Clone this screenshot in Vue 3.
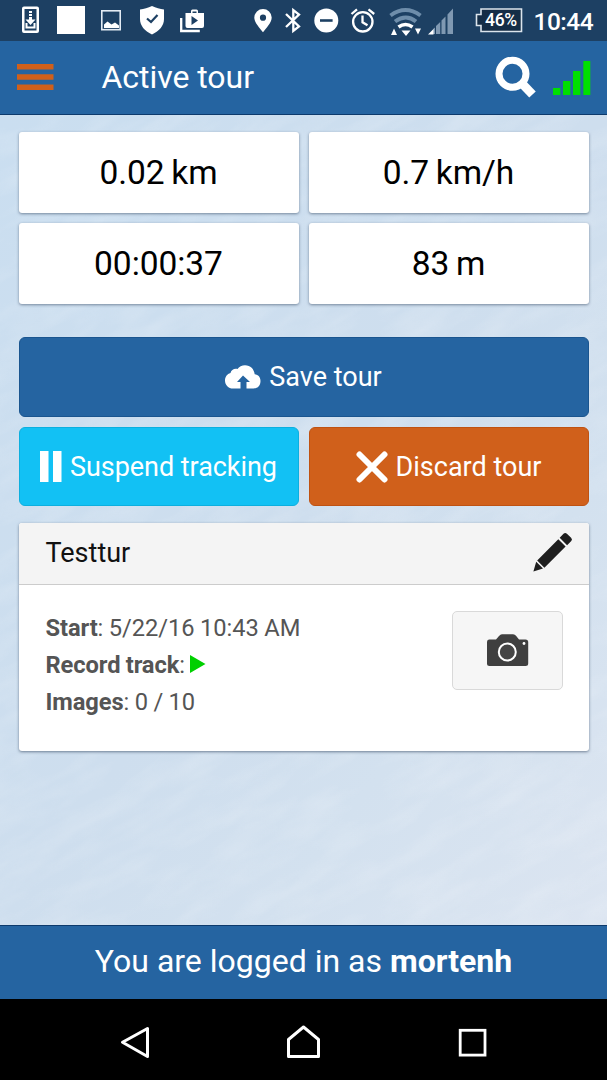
<script setup>
const stats = ['0.02 km', '0.7 km/h', '00:00:37', '83 m']
const tour = { name: 'Testtur', start: '5/22/16 10:43 AM', images: '0 / 10' }
const user = 'mortenh'
</script>

<template>
  <div class="phone">
    <div class="status">
      <svg class="s-dl" viewBox="21 0 19 41"><path fill="#fff" fill-rule="evenodd" d="M24 6.500h13a2 2 0 0 1 2 2v22.500a2 2 0 0 1-2 2H24a2 2 0 0 1-2-2V8.500a2 2 0 0 1 2-2ZM24.500 9v21.500h12V9Z" /><path fill="#fff" d="M29 11h3v2h-3zM29 14h3v2h-3zM29 17h3v2.500h3.500L30.500 25l-5-5.500H29zM25.500 23h2v3.500h6V23h2v5.500h-10z" /></svg>
      <svg class="s-sq" viewBox="57 0 28 41"><rect x="57" y="6" width="28" height="28" fill="#fff" /></svg>
      <svg class="s-img" viewBox="101 0 20 41"><rect x="101.800" y="10.800" width="18.400" height="18.900" fill="none" stroke="#e3ebf4" stroke-width="1.600" /><path fill="#fff" d="M104 28v-3.500l3.500-3 4 3 3.500-2 4 3V28z" /></svg>
      <svg class="s-shield" viewBox="140 0 24 41"><path fill="#fff" d="M152 6c4 2 8 3 12 3.500V19c0 6.500-4.500 12-12 15.500-7.500-3.500-12-9-12-15.500V9.500C144 9 148 8 152 6Z" /><path fill="none" stroke="#1d4063" stroke-width="2.200" d="m147 18.500 4 3.500 6.500-7" /></svg>
      <svg class="s-play" viewBox="180 0 25 41"><path fill="#fff" fill-rule="evenodd" d="M186 13h5v-2a1.500 1.500 0 0 1 1.500-1.500h4A1.500 1.500 0 0 1 198 11v2h6v13a2 2 0 0 1-2 2h-14.500a2 2 0 0 1-2-2V13Zm6.500 0h4v-1.500h-4ZM191.500 16v9l6.500-4.500Z" /><path fill="none" stroke="#fff" stroke-width="2.300" d="M181.200 18v13h18.600" /></svg>
      <svg class="s-pin" viewBox="254 0 18 41"><path fill="#fff" fill-rule="evenodd" d="M263 9a8.700 8.700 0 0 1 8.700 8.500c0 5-5.700 11-8.700 14.800-3-3.800-8.700-9.800-8.700-14.800A8.700 8.700 0 0 1 263 9Zm0 5.600a3.100 3.100 0 1 0 0 6.200 3.100 3.100 0 0 0 0-6.200Z" /></svg>
      <svg class="s-bt" viewBox="284 0 17 41"><path fill="none" stroke="#fff" stroke-width="2.300" d="m286 14 13 12.500-5.700 4.500V10l5.700 4.500L286 27" /></svg>
      <svg class="s-dnd" viewBox="314 0 25 41"><circle cx="326.300" cy="20.500" r="12" fill="#fff" /><path stroke="#1d4063" stroke-width="2.600" d="M320 20.500h12.600" /></svg>
      <svg class="s-alarm" viewBox="350 0 26 41"><g fill="none" stroke="#fff" stroke-width="2.300"><circle cx="362.800" cy="21.800" r="9.700" /><path d="M362.500 15.500v6.800l5 3M351.500 14l5.500-4.700M368.500 9.300l5.700 4.700" /></g></svg>
      <svg class="s-wifi" viewBox="389 0 35 41"><g fill="none" stroke="#6e8daa" stroke-width="4"><path d="M390.500 15.500q15-11 30 0" /><path d="M395 21.500q11-8 21 0" /></g><path fill="none" stroke="#fff" stroke-width="3.500" d="M398.500 27q7-5 14 0" /><path fill="#fff" d="m401.500 30.500 9 0-4.500 5.500zM391 35l3-6.500 3 6.500zM415 28.500h6l-3 6z" /></svg>
      <svg class="s-cell" viewBox="427 0 27 41"><path fill="#8099b2" d="m433 29 2-1.500V34h-2zM436 26l4.200-4V34H436zM441.500 20.500l4-4V34h-4zM447.500 14.500l5.500-6V34h-5.500z" /><path fill="#fff" d="M428 34.500 433.500 29v5.500z" /></svg>
      <div class="battery">
        <svg viewBox="475 0 48 41"><path fill="#142d46" stroke="#dbe4ec" stroke-width="1.600" d="M481 9h40.500v22.500H481v-6h-4.500V14.500H481z" /></svg>
        <span>46%</span>
      </div>
      <span class="clock">10:44</span>
    </div>

    <header>
      <svg class="menu" viewBox="0 0 37 27"><path fill="#d0601b" d="M0 0h36.500v5.500H0zM0 10.200h36.500v5.500H0zM0 20.500h36.500V26H0z" /></svg>
      <h1>Active tour</h1>
      <svg class="search" viewBox="495 56 42 43"><circle cx="512.500" cy="73.700" r="13.500" fill="none" stroke="#fff" stroke-width="7" /><path stroke="#fff" stroke-width="9" d="m521.500 83 11 11.500" /></svg>
      <svg class="bars" viewBox="553 60 38 35"><path fill="#00df00" d="M553 88h7.300v7H553zM563 81h7.300v14H563zM573 71h7.300v24H573zM583.300 61h7v34h-7z" /></svg>
    </header>

    <main>
      <svg class="snow" width="607" height="810" preserveAspectRatio="none">
        <defs>
          <linearGradient id="sky" x1="0" y1="0" x2="1" y2="1">
            <stop offset="0" stop-color="#cadef0" /><stop offset=".5" stop-color="#cedeee" /><stop offset=".72" stop-color="#d3e1ef" /><stop offset="1" stop-color="#dce5f1" />
          </linearGradient>
          <filter id="grain" x="0" y="0" width="100%" height="100%">
            <feTurbulence type="fractalNoise" baseFrequency="0.015 0.05" numOctaves="3" seed="8" />
            <feColorMatrix values="0 0 0 0 1  0 0 0 0 1  0 0 0 0 1  1.200 0 0 0 -0.450" />
          </filter>
        </defs>
        <rect width="607" height="810" fill="url(#sky)" />
        <g transform="rotate(-28 300 400)"><rect x="-300" y="-200" width="1200" height="1200" filter="url(#grain)" opacity=".25" /></g>
      </svg>

      <section class="stats">
        <div v-for="s in stats" :key="s" class="stat">{{ s }}</div>
      </section>

      <section class="actions">
        <button class="btn save">
          <svg class="i-cloud" viewBox="0 0 36 24"><path fill="#fff" fill-rule="evenodd" d="M8 23.500C3.500 23.500 0 20 0 15.700 0 12 2 9 5.500 8 6 5 9.500 3 12.500 4 14 1.700 17 .3 20 .3c5.500 0 9 3.800 9.700 9 3.500.4 5.800 3 5.800 6.700 0 4.500-2.700 7.500-7 7.500h-7V17h3.500L18 10.500 12 17h3.500v6.500Z" /></svg>
          <span>Save tour</span>
        </button>
        <button class="btn suspend">
          <svg class="i-pause" viewBox="0 0 22 31"><path fill="#fff" d="M0 0h8.500v31H0zM13 0h8.500v31H13z" /></svg>
          <span>Suspend tracking</span>
        </button>
        <button class="btn discard">
          <svg class="i-x" viewBox="0 0 32 32"><path stroke="#fff" stroke-width="6" stroke-linecap="round" d="m3.500 3.500 25 25m0-25-25 25" /></svg>
          <span>Discard tour</span>
        </button>
      </section>

      <section class="card">
        <div class="card-head">
          <h2>{{ tour.name }}</h2>
          <svg class="i-pencil" viewBox="533 532 40 40"><path fill="#1e1e1e" d="m559.700 537.800 3.800-4q1.700-1.500 3.400 0l4.200 4q1.700 1.700.2 3.300l-4.200 4.200zM558.300 539.200l7.300 7.200L544.400 567.700l-7.200-7.100zM536.200 561.800l6.800 6.800-9.600 2.800z" /></svg>
        </div>
        <div class="card-body">
          <div class="info">
            <p><b>Start</b>: {{ tour.start }}</p>
            <p><b>Record track</b>: <svg class="i-go" viewBox="0 0 16 18"><path fill="#00d000" d="M0 0 15.500 9 0 18z" /></svg></p>
            <p><b>Images</b>: {{ tour.images }}</p>
          </div>
          <button class="camera">
            <svg viewBox="486 633 43 33"><path fill="#3f3f3f" d="M489 638.500h7l3-3.500q1.300-1.700 3-1.700h11q2 0 3.200 1.700l2.800 3.500h6.500q2.700 0 2.700 2.500v21.500q0 2.500-2.700 2.500H489.500q-2.500 0-2.500-2.500v-21.500q0-2.500 2-2.500Z" /><circle cx="507.300" cy="651" r="8.500" fill="#454545" stroke="#fff" stroke-width="2" /><circle cx="524" cy="642.500" r="1.400" fill="#fff" /></svg>
          </button>
        </div>
      </section>
    </main>

    <footer>You are logged in as&nbsp;<b>{{ user }}</b></footer>

    <nav>
      <svg class="n-back" viewBox="120 1024 30 36"><path fill="none" stroke="#fff" stroke-width="3" stroke-linejoin="round" d="M147.500 1028.500v28L122.500 1042.300z" /></svg>
      <svg class="n-home" viewBox="286 1024 35 36"><path fill="none" stroke="#fff" stroke-width="3" stroke-linejoin="round" d="M288.500 1056.500v-17l15-12.500 15 12.500v17z" /></svg>
      <svg class="n-recent" viewBox="458 1024 30 36"><rect x="460.200" y="1030.300" width="24.800" height="24.800" fill="none" stroke="#fff" stroke-width="2.800" /></svg>
    </nav>
  </div>
</template>

<style>
body { margin: 0; }
</style>

<style scoped>
.phone { width: 607px; height: 1080px; display: flex; flex-direction: column; overflow: hidden; font-family: Roboto, "Liberation Sans", sans-serif; }
svg { display: block; flex: none; }
.status { height: 41px; flex: none; background: #1d4063; display: flex; color: #fff; box-sizing: border-box; padding-left: 21px; }
.status > svg { height: 41px; }
.s-dl { width: 19px; }
.s-sq { width: 28px; margin-left: 17px; }
.s-img { width: 20px; margin-left: 16px; }
.s-shield { width: 24px; margin-left: 19px; }
.s-play { width: 25px; margin-left: 16px; }
.s-pin { width: 18px; margin-left: 49px; }
.s-bt { width: 17px; margin-left: 12px; }
.s-dnd { width: 25px; margin-left: 13px; }
.s-alarm { width: 26px; margin-left: 11px; }
.s-wifi { width: 35px; margin-left: 13px; }
.s-cell { width: 27px; margin-left: 3px; }
.battery { width: 48px; height: 41px; margin-left: 21px; display: grid; flex: none; }
.battery > * { grid-area: 1 / 1; }
.battery span { font-size: 17.500px; font-weight: 500; line-height: 41px; padding-left: 10px; letter-spacing: -.3px; }
.clock { margin-left: 10.500px; font-size: 24.500px; line-height: 43px; font-weight: 500; letter-spacing: -.5px; white-space: nowrap; }
header { height: 74px; flex: none; box-sizing: border-box; background: #2564a1; border-bottom: 1px solid #0d3a6c; display: flex; padding-left: 17px; position: relative; z-index: 1; }
.menu { width: 37px; height: 27px; margin-top: 23px; }
h1 { margin: 0 0 0 47.500px; width: 393.500px; font-size: 32px; font-weight: 400; line-height: 72px; letter-spacing: -.05px; color: #fff; }
.search { width: 42px; height: 43px; margin-top: 15px; }
.bars { width: 38px; height: 35px; margin: 19px 0 0 16px; }
main { height: 810px; flex: none; box-sizing: border-box; padding: 17px 18.500px 0; position: relative; overflow: hidden; }
.snow { position: absolute; inset: 0; z-index: 0; }
section { position: relative; z-index: 1; }
.stats { display: grid; grid-template-columns: 1fr 1fr; gap: 10px; }
.stat { height: 81px; border-radius: 3px; background: #fff; box-shadow: 0 1px 3px rgba(40, 60, 85, .55); font-size: 33.500px; line-height: 82px; letter-spacing: -.05px; word-spacing: -1.500px; text-align: center; color: #000; }
.actions { display: grid; grid-template-columns: 1fr 1fr; gap: 10px; margin-top: 33px; }
.btn { height: 79px; border: 1px solid; border-radius: 6px; display: flex; align-items: center; justify-content: center; gap: 8px; padding: 0; color: #fff; font: 400 27px Roboto, sans-serif; white-space: nowrap; }
.save { grid-column: 1 / 3; height: 80px; background: #2564a1; border-color: #1a558f; }
.suspend { background: #12c1f4; border-color: #0cafdf; }
.discard { background: #d0601b; border-color: #bf5212; }
.suspend span { letter-spacing: -.05px; }
.i-cloud { width: 36px; height: 24px; }
.i-pause { width: 22px; height: 31px; }
.i-x { width: 32px; height: 32px; }
.card { margin-top: 17px; height: 228px; border-radius: 3px; background: #fff; box-shadow: 0 1px 3px rgba(40, 60, 85, .6); overflow: visible; }
.card-head { height: 62px; box-sizing: border-box; border-bottom: 1px solid #ccc; background: #f4f4f4; border-radius: 3px 3px 0 0; display: flex; justify-content: space-between; padding: 0 16px 0 27px; }
h2 { margin: 0; font-size: 27px; font-weight: 400; line-height: 60px; color: #111; }
.i-pencil { width: 40px; height: 40px; margin-top: 9px; }
.card-body { display: flex; justify-content: space-between; padding: 24px 25.500px 0 27px; }
.info { color: #555; font-size: 23.700px; line-height: 37.200px; letter-spacing: -.03px; word-spacing: -.4px; padding-top: 1px; }
p { margin: 0; white-space: nowrap; }
b { font-weight: 700; }
.info b { letter-spacing: -.1px; }
.i-go { display: inline-block; width: 16px; height: 18px; margin-left: -.5px; }
.camera { width: 111px; height: 79px; margin: 2px 0 0; padding: 0; border: 1.500px solid #d9d9d9; border-radius: 5px; background: #f6f6f6; display: flex; align-items: center; justify-content: center; }
.camera svg { width: 43px; height: 33px; margin-top: -1px; }
footer { height: 74px; flex: none; box-sizing: border-box; background: #2564a1; border-top: 1px solid #0d3a6c; color: #fff; font-size: 32px; line-height: 70px; text-align: center; white-space: nowrap; }
nav { flex: 1; background: #000; display: flex; padding: 25px 0 0 120px; }
.n-back { width: 30px; height: 36px; }
.n-home { width: 35px; height: 36px; margin-left: 136px; }
.n-recent { width: 30px; height: 36px; margin-left: 137px; }
</style>
